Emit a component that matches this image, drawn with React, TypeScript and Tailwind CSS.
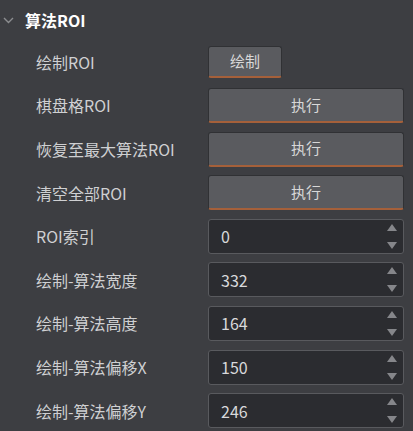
const font = { fontFamily: '"Noto Sans CJK SC", "Noto Sans", sans-serif' };

const actions = ["棋盘格ROI", "恢复至最大算法ROI", "清空全部ROI"];

const fields = [
  { label: "ROI索引", value: "0" },
  { label: "绘制-算法宽度", value: "332" },
  { label: "绘制-算法高度", value: "164" },
  { label: "绘制-算法偏移X", value: "150" },
  { label: "绘制-算法偏移Y", value: "246" },
];

function Spinner() {
  return (
    <div className="flex flex-col items-center justify-between h-[25px] mr-[6px]">
      <svg width="10" height="7" viewBox="0 0 10 7">
        <path d="M5 0 L10 7 L0 7 Z" fill="#85868a" />
      </svg>
      <svg width="10" height="7" viewBox="0 0 10 7">
        <path d="M0 0 L10 0 L5 7 Z" fill="#85868a" />
      </svg>
    </div>
  );
}

function Label({ children }: { children: string }) {
  return (
    <div className="w-[172px] shrink-0 text-[16px] text-[#cfd0d2] leading-none">{children}</div>
  );
}

export default function App() {
  return (
    <div className="w-[413px] h-[431px] overflow-hidden bg-[#3d3e42]" style={font}>
      <div className="h-[40px] flex items-center pl-[3px]">
        <svg width="11" height="7" viewBox="0 0 11 7" className="mt-[1px]">
          <path d="M1 1 L5.5 5.5 L10 1" stroke="#8c8d90" strokeWidth="1.4" fill="none" />
        </svg>
        <span className="ml-[11px] text-[16px] font-bold text-white">算法ROI</span>
      </div>

      <div className="pl-[36px] pr-[9px] flex flex-col gap-[8.6px]">
        <div className="flex items-center h-[32px] mt-[6px] mb-[1.4px]">
          <Label>绘制ROI</Label>
          <button className="w-[74px] h-[32px] rounded-[3px] bg-[#5a5b5f] border border-[#303134] border-b-2 border-b-[#a5603a] text-[15px] text-[#d8d8d8]">
            绘制
          </button>
        </div>

        {actions.map((a) => (
          <div key={a} className="flex items-center h-[35px]">
            <Label>{a}</Label>
            <button className="flex-1 h-[35px] rounded-[3px] bg-[#5a5b5f] border border-[#303134] border-b-2 border-b-[#a5603a] text-[15px] text-[#d8d8d8]">
              执行
            </button>
          </div>
        ))}

        {fields.map((f) => (
          <div key={f.label} className="flex items-center h-[35px]">
            <Label>{f.label}</Label>
            <div className="flex-1 h-[35px] rounded-[3px] bg-[#2b2c30] border border-[#595a5e] flex items-center justify-between">
              <span className="pl-[12px] text-[16px] text-[#d8d9db]">{f.value}</span>
              <Spinner />
            </div>
          </div>
        ))}
      </div>
    </div>
  );
}
